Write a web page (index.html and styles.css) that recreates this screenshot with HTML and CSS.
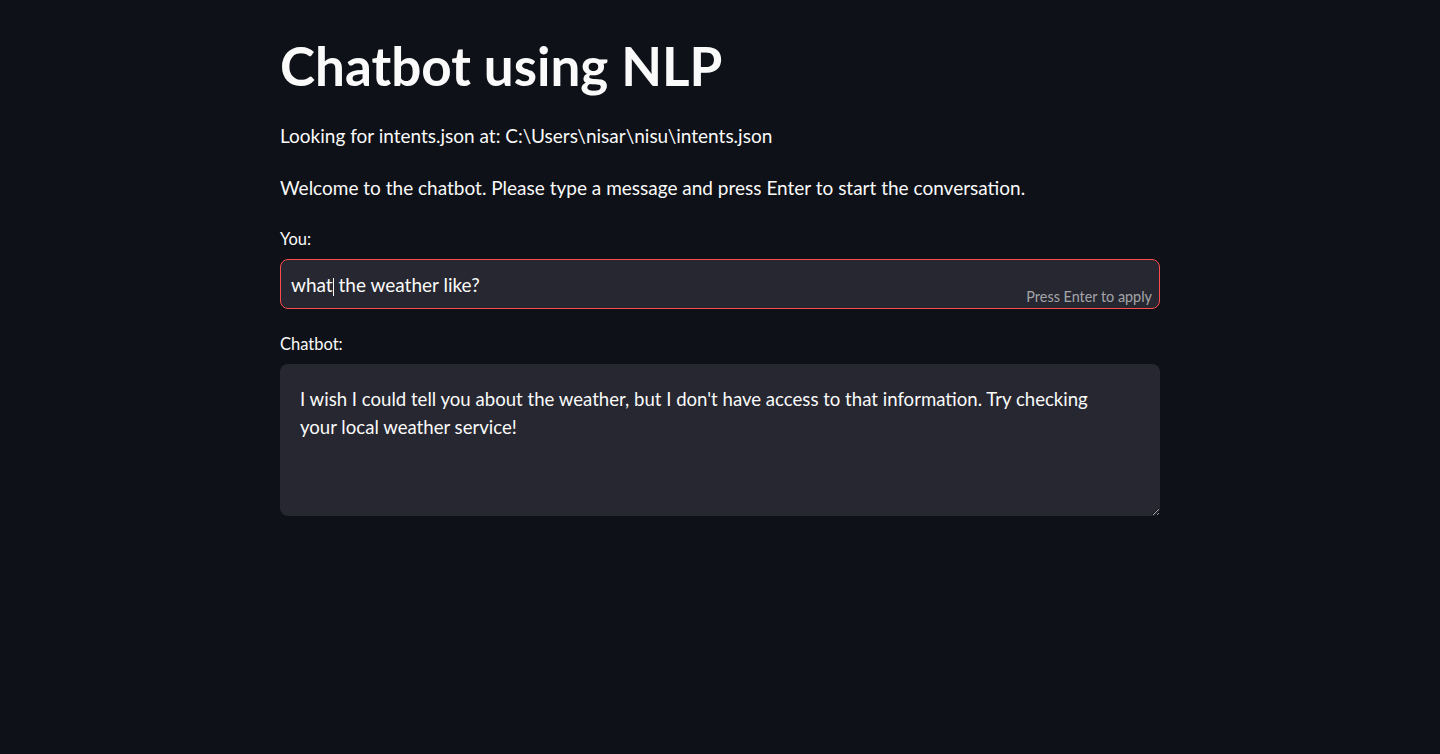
FILE: index.html
```html
<!DOCTYPE html>
<html lang="en">
<head>
<meta charset="utf-8">
<title>Chatbot using NLP</title>
<link rel="stylesheet" href="styles.css">
</head>
<body>
<main class="app">
  <div class="block">
    <h1 class="title">Chatbot using NLP</h1>
    <p class="text">Looking for intents.json at: C:\Users\nisar\nisu\intents.json</p>
    <p class="text">Welcome to the chatbot. Please type a message and press Enter to start the conversation.</p>
    <div class="field">
      <label class="label">You:</label>
      <div class="input">
        <span class="value">what<span class="caret"></span> the weather like?</span>
        <span class="hint">Press Enter to apply</span>
      </div>
    </div>
    <div class="field field-area">
      <label class="label" for="reply">Chatbot:</label>
      <textarea id="reply" class="area" readonly>I wish I could tell you about the weather, but I don't have access to that information. Try checking your local weather service!</textarea>
    </div>
  </div>
</main>
</body>
</html>
```
FILE: styles.css
```css
html, body {
  margin: 0;
  padding: 0;
  background: #0e1117;
  color: #fafafa;
  font-family: Lato, "Noto Sans", sans-serif;
}
.app {
  min-height: 754px;
  display: flex;
  justify-content: center;
}
.block {
  width: 880px;
  padding-top: 34px;
  display: flex;
  flex-direction: column;
}
.title {
  margin: 0;
  font-size: 53px;
  font-weight: 700;
  line-height: 64px;
}
.text {
  margin: 0;
  font-size: 19px;
  line-height: 28px;
}
.title + .text { margin-top: 24px; }
.text + .text { margin-top: 24px; }
.field {
  display: flex;
  flex-direction: column;
  margin-top: 26px;
}
.field-area { margin-top: 24px; }
.label {
  font-size: 16.5px;
  line-height: 22px;
  margin-bottom: 9px;
}
.input {
  height: 50px;
  box-sizing: border-box;
  border: 1px solid #ff4b4b;
  border-radius: 8px;
  background: #262730;
  display: flex;
  align-items: center;
  position: relative;
  padding: 0 10px;
}
.value {
  font-size: 19px;
}
.caret {
  display: inline-block;
  width: 1px;
  height: 18px;
  background: #fafafa;
  vertical-align: -4px;
}
.hint {
  position: absolute;
  right: 7px;
  bottom: 3px;
  font-size: 14.4px;
  color: rgba(250, 250, 250, 0.6);
}
.area {
  height: 152px;
  box-sizing: border-box;
  border: none;
  border-radius: 8px;
  background: #262730;
  color: #fafafa;
  font-family: inherit;
  font-size: 18.6px;
  line-height: 28px;
  padding: 21px 44px 21px 20px;
  resize: vertical;
  outline: none;
}
```
